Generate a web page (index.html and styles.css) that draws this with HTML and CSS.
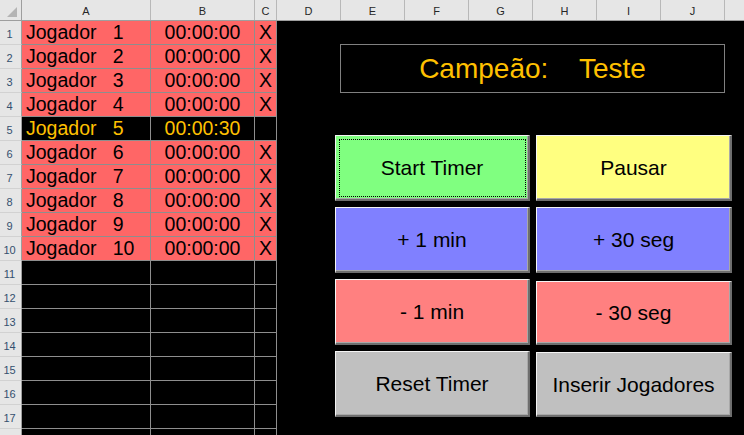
FILE: index.html
```html
<!DOCTYPE html>
<html lang="pt">
<head>
<meta charset="utf-8">
<title>Timer</title>
<link rel="stylesheet" href="styles.css">
</head>
<body>
<div class="app">
  <div class="colhdr">
    <div class="hc corner"><svg width="21" height="20" viewBox="0 0 21 20"><polygon points="17,7 17,17 7,17" fill="#b4b4b4"/></svg></div>
    <div class="hc ca">A</div>
    <div class="hc cb">B</div>
    <div class="hc cc">C</div>
    <div class="hc cd">D</div>
    <div class="hc cd">E</div>
    <div class="hc cd">F</div>
    <div class="hc cd">G</div>
    <div class="hc cd">H</div>
    <div class="hc cd">I</div>
    <div class="hc cd">J</div>
    <div class="hc ck"></div>
  </div>
  <div class="main">
    <div class="sheet">
      <div class="rh">1</div><div class="c red name">Jogador   1</div><div class="c red time">00:00:00</div><div class="c red x">X</div>
      <div class="rh">2</div><div class="c red name">Jogador   2</div><div class="c red time">00:00:00</div><div class="c red x">X</div>
      <div class="rh">3</div><div class="c red name">Jogador   3</div><div class="c red time">00:00:00</div><div class="c red x">X</div>
      <div class="rh">4</div><div class="c red name">Jogador   4</div><div class="c red time">00:00:00</div><div class="c red x">X</div>
      <div class="rh">5</div><div class="c act name">Jogador   5</div><div class="c act time">00:00:30</div><div class="c act x"></div>
      <div class="rh">6</div><div class="c red name">Jogador   6</div><div class="c red time">00:00:00</div><div class="c red x">X</div>
      <div class="rh">7</div><div class="c red name">Jogador   7</div><div class="c red time">00:00:00</div><div class="c red x">X</div>
      <div class="rh">8</div><div class="c red name">Jogador   8</div><div class="c red time">00:00:00</div><div class="c red x">X</div>
      <div class="rh">9</div><div class="c red name">Jogador   9</div><div class="c red time">00:00:00</div><div class="c red x">X</div>
      <div class="rh">10</div><div class="c red name">Jogador   10</div><div class="c red time">00:00:00</div><div class="c red x">X</div>
      <div class="rh">11</div><div class="c"></div><div class="c"></div><div class="c"></div>
      <div class="rh">12</div><div class="c"></div><div class="c"></div><div class="c"></div>
      <div class="rh">13</div><div class="c"></div><div class="c"></div><div class="c"></div>
      <div class="rh">14</div><div class="c"></div><div class="c"></div><div class="c"></div>
      <div class="rh">15</div><div class="c"></div><div class="c"></div><div class="c"></div>
      <div class="rh">16</div><div class="c"></div><div class="c"></div><div class="c"></div>
      <div class="rh">17</div><div class="c"></div><div class="c"></div><div class="c"></div>
      <div class="rh"></div><div class="c"></div><div class="c"></div><div class="c"></div>
    </div>
    <div class="panel">
      <div class="champ">Campeão:    Teste</div>
      <div class="buttons">
        <button class="btn green focus">Start Timer</button>
        <button class="btn yellow">Pausar</button>
        <button class="btn blue">+ 1 min</button>
        <button class="btn blue">+ 30 seg</button>
        <button class="btn pink">- 1 min</button>
        <button class="btn pink low2">- 30 seg</button>
        <button class="btn gray">Reset Timer</button>
        <button class="btn gray low1">Inserir Jogadores</button>
      </div>
    </div>
  </div>
</div>
</body>
</html>
```
FILE: styles.css
```css
* { box-sizing: border-box; }
html, body {
  margin: 0;
  padding: 0;
  background: #000;
  width: 744px;
  height: 435px;
  overflow: hidden;
  font-family: "Liberation Sans", Arial, sans-serif;
}
.app { width: 744px; height: 435px; display: flex; flex-direction: column; }

.colhdr {
  display: flex;
  height: 21px;
  flex: none;
  background: #e6e6e6;
  border-bottom: 1px solid #9e9e9e;
}
.hc {
  height: 20px;
  border-right: 1px solid #b8b8b8;
  font-size: 11px;
  color: #262626;
  display: flex;
  align-items: center;
  justify-content: center;
  padding-top: 2px;
  flex: none;
}
.corner { width: 22px; padding: 0; border-right: 1px solid #9e9e9e; align-items: flex-start; justify-content: flex-start; }
.ca { width: 129px; }
.cb { width: 104px; }
.cc { width: 22px; }
.cd { width: 64px; }
.ck { flex: 1; border-right: none; }

.main { display: flex; flex: 1; min-height: 0; }

.sheet {
  display: grid;
  grid-template-columns: 22px 129px 104px 22px;
  grid-auto-rows: 24px;
  flex: none;
  align-content: start;
}
.rh {
  background: #e6e6e6;
  border-right: 1px solid #9e9e9e;
  border-bottom: 1px solid #d2d2d2;
  font-size: 11px;
  color: #34506e;
  display: flex;
  align-items: flex-end;
  justify-content: center;
  padding-bottom: 4px;
  padding-right: 2px;
  line-height: 1;
}
.c {
  background: #000;
  border-right: 1px solid #8e8e8e;
  border-bottom: 1px solid #8e8e8e;
  font-size: 19.5px;
  line-height: 19.5px;
  color: #000;
  display: flex;
  align-items: flex-end;
  padding-bottom: 2px;
  white-space: pre;
}
.red { background: #ff6666; }
.act { background: #000; color: #ffc000; }
.name { padding-left: 4px; }
.time { justify-content: center; }
.x { justify-content: center; }

.panel {
  flex: 1;
  background: #000;
  padding-left: 58px;
  padding-top: 23px;
}
.champ {
  margin-left: 5px;
  width: 385px;
  height: 49px;
  border: 1px solid #808080;
  color: #ffc000;
  font-size: 28px;
  line-height: 28px;
  display: flex;
  align-items: center;
  justify-content: center;
  white-space: pre;
}
.buttons {
  margin-top: 42px;
  display: grid;
  grid-template-columns: 195px 196px;
  grid-auto-rows: 66px;
  column-gap: 6px;
  row-gap: 6px;
}
.btn {
  font-family: "Liberation Sans", Arial, sans-serif;
  font-size: 21px;
  line-height: 21px;
  color: #000;
  border-style: solid;
  border-width: 1px 2px 2px 1px;
  border-color: #f4f4f4 #6e6e6e #6e6e6e #f4f4f4;
  box-shadow: inset -1px -1px 0 #a8a8a8;
  padding: 0;
  margin: 0;
  display: flex;
  align-items: center;
  justify-content: center;
}
.low2 { margin-top: 2px; }
.low1 { margin-top: 1px; }
.green { background: #80ff80; }
.yellow { background: #ffff80; }
.blue { background: #8080ff; }
.pink { background: #ff8080; }
.gray { background: #c0c0c0; }
.focus { outline: 1px dotted #000; outline-offset: -5px; }
```
